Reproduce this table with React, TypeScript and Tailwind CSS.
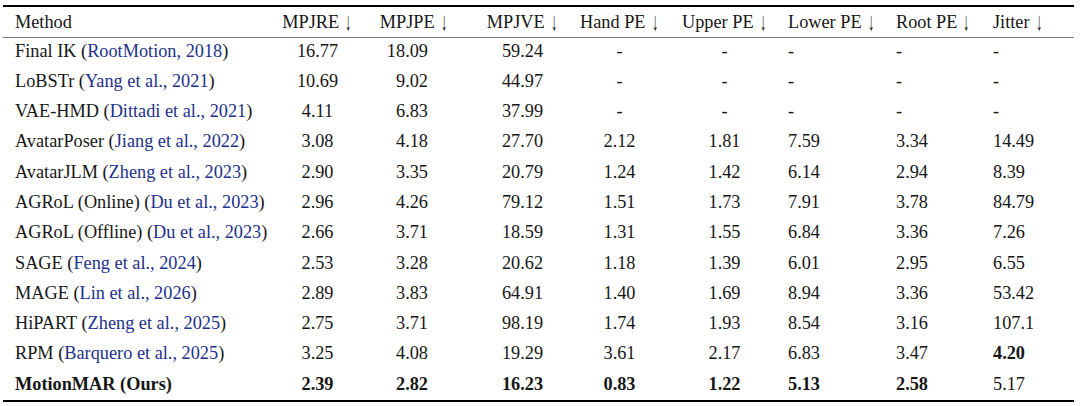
type Row = {
  name: string;
  cite?: string;
  vals: string[];
  bold?: boolean[];
  ours?: boolean;
};

const rows: Row[] = [
  { name: "Final IK", cite: "RootMotion, 2018", vals: ["16.77", "18.09", "59.24", "-", "-", "-", "-", "-"] },
  { name: "LoBSTr", cite: "Yang et al., 2021", vals: ["10.69", "9.02", "44.97", "-", "-", "-", "-", "-"] },
  { name: "VAE-HMD", cite: "Dittadi et al., 2021", vals: ["4.11", "6.83", "37.99", "-", "-", "-", "-", "-"] },
  { name: "AvatarPoser", cite: "Jiang et al., 2022", vals: ["3.08", "4.18", "27.70", "2.12", "1.81", "7.59", "3.34", "14.49"] },
  { name: "AvatarJLM", cite: "Zheng et al., 2023", vals: ["2.90", "3.35", "20.79", "1.24", "1.42", "6.14", "2.94", "8.39"] },
  { name: "AGRoL (Online)", cite: "Du et al., 2023", vals: ["2.96", "4.26", "79.12", "1.51", "1.73", "7.91", "3.78", "84.79"] },
  { name: "AGRoL (Offline)", cite: "Du et al., 2023", vals: ["2.66", "3.71", "18.59", "1.31", "1.55", "6.84", "3.36", "7.26"] },
  { name: "SAGE", cite: "Feng et al., 2024", vals: ["2.53", "3.28", "20.62", "1.18", "1.39", "6.01", "2.95", "6.55"] },
  { name: "MAGE", cite: "Lin et al., 2026", vals: ["2.89", "3.83", "64.91", "1.40", "1.69", "8.94", "3.36", "53.42"] },
  { name: "HiPART", cite: "Zheng et al., 2025", vals: ["2.75", "3.71", "98.19", "1.74", "1.93", "8.54", "3.16", "107.1"] },
  {
    name: "RPM",
    cite: "Barquero et al., 2025",
    vals: ["3.25", "4.08", "19.29", "3.61", "2.17", "6.83", "3.47", "4.20"],
    bold: [false, false, false, false, false, false, false, true],
  },
  {
    name: "MotionMAR (Ours)",
    ours: true,
    vals: ["2.39", "2.82", "16.23", "0.83", "1.22", "5.13", "2.58", "5.17"],
    bold: [true, true, true, true, true, true, true, false],
  },
];

const headers = ["MPJRE", "MPJPE", "MPJVE", "Hand PE", "Upper PE", "Lower PE", "Root PE", "Jitter"];

// per-column width + alignment of the header and of the body cells
const cols = [
  { w: "w-[85px]", head: "text-center", body: "text-center" },
  { w: "w-[108px]", head: "text-center", body: "text-right pr-[40px]" },
  { w: "w-[109px]", head: "text-center", body: "text-center" },
  { w: "w-[85px]", head: "text-center", body: "text-center" },
  { w: "w-[125px]", head: "text-center", body: "text-center" },
  { w: "w-[98px]", head: "text-left pl-[1px]", body: "text-left pl-[1px]" },
  { w: "w-[97px]", head: "text-left pl-[11px]", body: "text-left pl-[11px]" },
  { w: "w-[92px]", head: "text-left pl-[11px]", body: "text-left pl-[11px]" },
];

export default function App() {
  return (
    <div className="h-[406px] w-[1080px] bg-white px-[3px] pt-[5px] font-['Liberation_Serif',serif] text-[18.3px] text-[#161616]">
      <table className="w-[1071px] table-fixed border-collapse border-t-2 border-b-2 border-black">
        <thead>
          <tr className="h-[30px] border-b border-[#777]">
            <th className="w-[272px] pl-[12px] text-left font-normal leading-[30px]">Method</th>
            {headers.map((h, i) => (
              <th key={h} className={`${cols[i].w} ${cols[i].head} whitespace-nowrap font-normal leading-[30px]`}>
                {h}
                <span className="ml-[5px] inline-block origin-bottom translate-y-[3px] scale-x-75 scale-y-150 text-[17px] leading-none">↓</span>
              </th>
            ))}
          </tr>
        </thead>
        <tbody>
          {rows.map((r) => (
            <tr key={r.name} className="h-[30.3px] align-top">
              <td className={`whitespace-nowrap pl-[12px] leading-[26px] ${r.ours ? "font-bold" : ""}`}>
                {r.name}
                {r.cite && (
                  <>
                    {" "}(<span className="text-[#22318a]">{r.cite}</span>)
                  </>
                )}
              </td>
              {r.vals.map((v, i) => (
                <td
                  key={i}
                  className={`${cols[i].body} leading-[26px] ${r.bold?.[i] ? "font-bold" : ""}`}
                >
                  {v}
                </td>
              ))}
            </tr>
          ))}
        </tbody>
      </table>
    </div>
  );
}
